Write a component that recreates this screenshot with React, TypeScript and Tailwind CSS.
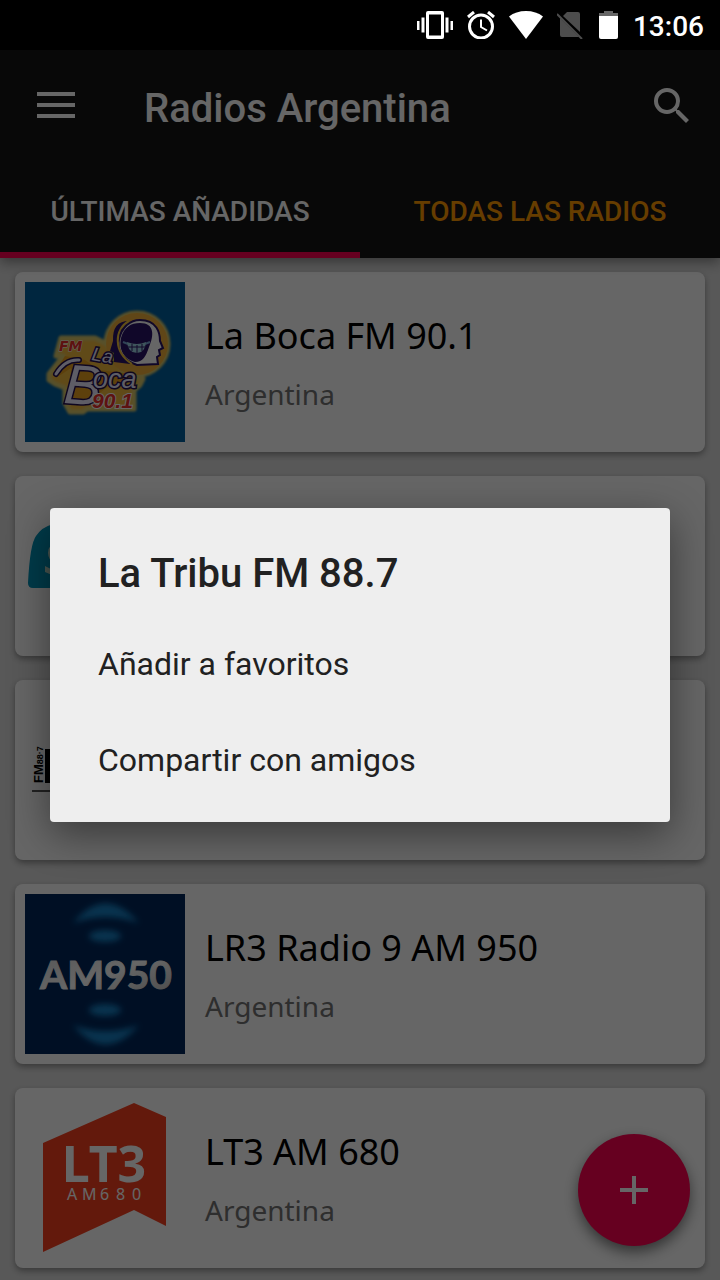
import { useState, type ReactNode } from "react";

const TABS = ["ÚLTIMAS AÑADIDAS", "TODAS LAS RADIOS"];

function LaBocaLogo() {
  return (
    <svg viewBox="0 0 160 160" className="w-full h-full">
      <defs>
        <filter id="halo">
          <feGaussianBlur stdDeviation="1" />
        </filter>
      </defs>
      <rect width="160" height="160" fill="#005f9e" />
      <g fill="#f0b83c" stroke="#d9c86a" strokeWidth="5" strokeLinejoin="round" filter="url(#halo)">
        <circle cx="112" cy="62" r="31" />
        <path d="M36 56H70L82 62L100 92L118 97L115 103L109 108V127H62L58 130H45L40 121V106L30 102L24 98V92L38 74H31Z" />
      </g>
      <circle cx="112" cy="62" r="31" fill="#f0b03a" />
      <path d="M40 74L60 78L74 88L106 92L108 97L84 104L68 116L52 124L46 118V86L34 94L30 90Z" fill="#e8a020" />
      {/* heads */}
      <path d="M104 39Q87 39 88 59L85 69L89 71V80L105 82Z" fill="#2a1266" />
      <path d="M115 38C132 38 135 51 135 59L138 66L134 68L135 73L132 75L133 82L112 83C96 77 92 67 94 57C97 45 105 38 115 38Z" fill="#fff" stroke="#2a1266" strokeWidth="2" />
      <path d="M115 41C130 41 129 54 124 65C121 74 118 80 110 80C97 76 94 66 96 56C99 45 106 41 115 41Z" fill="#2a1266" />
      <path d="M104 39C89 47 88 70 107 82" fill="none" stroke="#f2c23e" strokeWidth="2" />
      <path d="M98 60L103 62M125 60L120 62" stroke="#78a7d8" strokeWidth="2" />
      <path d="M102 60Q112 64 121 60Q120 71 112 71Q103 71 102 60Z" fill="#9ed4e6" />
      <path d="M103 65H120M107 62V69M112 63V71M117 62V69" stroke="#2a1266" />
      {/* lettering */}
      <text x="34" y="69" fontSize="14" fontFamily="DejaVu Sans" fontStyle="italic" fontWeight="700" fill="#e92f2c" stroke="#fff" strokeWidth="1" paintOrder="stroke">
        FM
      </text>
      <g fontFamily="Liberation Sans" fontStyle="italic" fill="#ece9ff" stroke="#241052" strokeWidth="3" paintOrder="stroke">
        <text x="38" y="121" fontSize="56" transform="rotate(4 38 121)">B</text>
        <text x="66" y="78" fontSize="19" transform="rotate(10 66 78)">La</text>
        <text x="68" y="106" fontSize="27">oca</text>
      </g>
      <path d="M31 92Q40 77 54 78" fill="none" stroke="#241052" strokeWidth="6" strokeLinecap="round" />
      <path d="M31 92Q40 77 54 78" fill="none" stroke="#ece9ff" strokeWidth="3" strokeLinecap="round" />
      <text x="67" y="126" fontSize="21" fontFamily="Liberation Sans" fontStyle="italic" fontWeight="700" fill="#e92f2c" stroke="#fff" strokeWidth="2" paintOrder="stroke">
        90.1
      </text>
    </svg>
  );
}

function TealLogo() {
  return (
    <svg viewBox="0 0 160 160" className="w-full h-full">
      <path d="M3 97Q5 58 11 50Q17 41 28 38H130Q150 40 154 97Q155 102 149 102H8Q3 102 3 97Z" fill="#0093b8" />
      <path d="M34 54Q23 58 23 67Q23 74 30 78L26 83L20 80V86L27 89H34V76L29 68L34 60Z" fill="#b8d6c8" />
    </svg>
  );
}

function LaTribuLogo() {
  return (
    <svg viewBox="0 0 160 160" className="w-full h-full">
      <text x="18" y="93" fontSize="13" fontWeight="700" fontFamily="Liberation Sans" transform="rotate(-90 18 93)">
        FM<tspan fontSize="9">88·7</tspan>
      </text>
      <path d="M20 59H60V93H20Z" />
      <path d="M7 101H150" stroke="#555" strokeWidth="2" />
    </svg>
  );
}

function Am950Logo() {
  return (
    <svg viewBox="0 0 160 160" className="w-full h-full">
      <defs>
        <filter id="glow" x="-50%" y="-100%" width="200%" height="300%">
          <feGaussianBlur stdDeviation="3" />
        </filter>
        <linearGradient id="steel" x1="0" y1="0" x2="1" y2="1">
          <stop offset="0" stopColor="#d6d6d6" />
          <stop offset="0.5" stopColor="#ffffff" />
          <stop offset="1" stopColor="#bdbdbd" />
        </linearGradient>
      </defs>
      <rect width="160" height="160" fill="#00265a" />
      <g fill="#1681c4" filter="url(#glow)">
        <path d="M48 29Q80 -10 114 29Q80 17 48 29Z" />
        <ellipse cx="80" cy="42" rx="16" ry="6" />
        <ellipse cx="80" cy="116" rx="16" ry="6" />
        <path d="M48 131Q80 170 114 131Q80 143 48 131Z" />
      </g>
      <text x="81" y="95" textAnchor="middle" fontSize="39" fontWeight="700" fontFamily="Lato" fill="url(#steel)" stroke="url(#steel)">
        AM950
      </text>
    </svg>
  );
}

function Lt3Logo() {
  return (
    <svg viewBox="0 0 160 160" className="w-full h-full">
      <path d="M18 45L109 5L141 19V128L109 112L18 154Z" fill="#f8401f" />
      <text x="79" y="84" textAnchor="middle" fontSize="50" fontWeight="700" fontFamily="Noto Sans" fill="#fff">
        LT3
      </text>
      <text x="42 57 75 91 107" y="102" fontSize="16" fontFamily="Noto Sans" fill="#fff">AM680</text>
    </svg>
  );
}

const STATIONS: { name: string; country: string; logo: ReactNode }[] = [
  { name: "La Boca FM 90.1", country: "Argentina", logo: <LaBocaLogo /> },
  { name: "", country: "", logo: <TealLogo /> },
  { name: "", country: "", logo: <LaTribuLogo /> },
  { name: "LR3 Radio 9 AM 950", country: "Argentina", logo: <Am950Logo /> },
  { name: "LT3 AM 680", country: "Argentina", logo: <Lt3Logo /> },
];

function StatusBar() {
  return (
    <div className="relative z-30 flex h-[50px] shrink-0 items-center justify-end gap-3.5 bg-black pr-4 text-white">
      {/* Vibrate */}
      <svg className="w-9 h-7" viewBox="0 0 36 28" fill="currentColor">
        <path d="M0 10h2.500v9H0zM4.500 6.500h3v15h-3zM28.500 6.500h3v15h-3zM33.500 10H36v9h-2.500z" />
        <path fillRule="evenodd" d="M11 0h14a2 2 0 0 1 2 2v24a2 2 0 0 1-2 2H11a2 2 0 0 1-2-2V2a2 2 0 0 1 2-2zM12 3.500v21h12v-21z" />
      </svg>
      {/* Alarm */}
      <svg className="w-7 h-7" viewBox="0 0 28 28" fill="none" stroke="currentColor" strokeWidth="3">
        <circle cx="14" cy="15.500" r="11.500" />
        <path d="M14 8.500V16L20 19.500" strokeWidth="2" />
        <path d="M1 6L7 1M27 6L21 1" />
      </svg>
      {/* Wifi */}
      <svg className="w-[34px] h-7" viewBox="0 0 34 28" fill="currentColor">
        <path d="M0 5.500Q7 0 17 0T34 5.500L17 28Z" />
      </svg>
      {/* No SIM */}
      <svg className="w-7 h-7" viewBox="0 0 28 28" fill="#4d4d4d">
        <path d="M10 1H21a2 2 0 0 1 2 2V21L6 5ZM3 7L22 26H5a2 2 0 0 1-2-2Z" />
        <path d="M0 3L25 28" stroke="#4d4d4d" strokeWidth="2" />
      </svg>
      {/* Battery */}
      <svg className="w-5 h-7" viewBox="0 0 20 28">
        <path d="M5 0h9v2h5v4H0V2h5z" fill="#666" />
        <path d="M0 5h19v21a2 2 0 0 1-2 2H2a2 2 0 0 1-2-2z" fill="#fff" />
      </svg>
      <time className="pt-1 text-[28px] leading-8 font-medium">13:06</time>
    </div>
  );
}

export default function App() {
  const [tab, setTab] = useState(0);
  const [open, setOpen] = useState(true);

  return (
    <div className="relative flex h-screen flex-col overflow-hidden bg-[#dcdcdc] font-[Roboto,sans-serif]">
      <StatusBar />

      {/* App bar */}
      <header className="relative z-10 shrink-0 bg-[#141414] text-white shadow-[0_4px_12px_rgba(0,0,0,0.4)]">
        <div className="flex h-28 items-center px-8">
          <button aria-label="Menú" className="flex size-12 items-center justify-center pb-0.5">
            <svg className="w-[38px] h-[26px]" viewBox="0 0 38 26" fill="currentColor">
              <path d="M0 0h38v4H0zM0 11h38v4H0zM0 22h38v4H0z" />
            </svg>
          </button>
          <h1 className="ml-16 flex-1 pt-1.5 text-[40px] leading-12 font-medium">Radios Argentina</h1>
          <button aria-label="Buscar" className="-mr-2 size-12">
            <svg className="size-12" viewBox="0 0 24 24" fill="currentColor">
              <path d="M15.500 14h-.79l-.28-.27A6.471 6.471 0 0 0 16 9.500 6.500 6.500 0 1 0 9.500 16c1.610 0 3.090-.59 4.230-1.570l.27.28v.79l5 4.990L20.490 19l-4.990-5zm-6 0C7.010 14 5 11.990 5 9.500S7.010 5 9.500 5 14 7.010 14 9.500 11.990 14 9.500 14z" />
            </svg>
          </button>
        </div>
        <div role="tablist" className="grid h-24 grid-cols-2">
          {TABS.map((label, i) => (
            <button
              key={label}
              role="tab"
              aria-selected={tab === i}
              onClick={() => setTab(i)}
              className={`border-b-6 pt-2.5 text-[28px] leading-8 font-medium ${
                tab === i ? "border-[#ff0052] text-white" : "border-transparent text-[#ff9800]"
              }`}
            >
              {label}
            </button>
          ))}
        </div>
      </header>

      {/* Stations */}
      <ul className="flex flex-1 flex-col gap-6 overflow-hidden px-[15px] pt-3.5">
        {STATIONS.map(({ name, country, logo }, i) => (
          <li key={i} className="flex shrink-0 gap-5 rounded-lg bg-white p-2.5 font-['Noto_Sans',sans-serif] shadow-[0_3px_6px_rgba(0,0,0,0.35)]">
            <div className="size-40 shrink-0">{logo}</div>
            <div className="flex flex-col gap-3 pt-7">
              <h2 className="text-[36px] leading-[52px] text-black">{name}</h2>
              <p className="text-[28px] leading-10 text-[#737373]">{country}</p>
            </div>
          </li>
        ))}
      </ul>

      <button
        aria-label="Añadir radio"
        className="absolute right-[30px] bottom-[34px] flex size-28 items-center justify-center rounded-full bg-[#ff0052] text-white shadow-[0_6px_14px_rgba(0,0,0,0.5)]"
      >
        <svg className="size-7" viewBox="0 0 28 28" fill="currentColor">
          <path d="M12 0h4v12h12v4H16v12h-4V16H0v-4h12z" />
        </svg>
      </button>

      {/* Station menu */}
      {open && (
        <div className="absolute inset-0 z-20 flex items-center bg-black/60 px-[50px] pt-[50px]" onClick={() => setOpen(false)}>
          <div
            role="dialog"
            aria-labelledby="station-name"
            className="w-full rounded bg-[#eeeeee] pb-3.5 text-[#212121] shadow-[0_12px_40px_rgba(0,0,0,0.45)]"
          >
            <h2 id="station-name" className="px-12 pt-[42px] pb-[18px] text-[40px] leading-12 font-medium">La Tribu FM 88.7</h2>
            <button className="block h-24 w-full px-12 text-left text-[32px]">Añadir a favoritos</button>
            <button className="block h-24 w-full px-12 text-left text-[32px]">Compartir con amigos</button>
          </div>
        </div>
      )}
    </div>
  );
}
